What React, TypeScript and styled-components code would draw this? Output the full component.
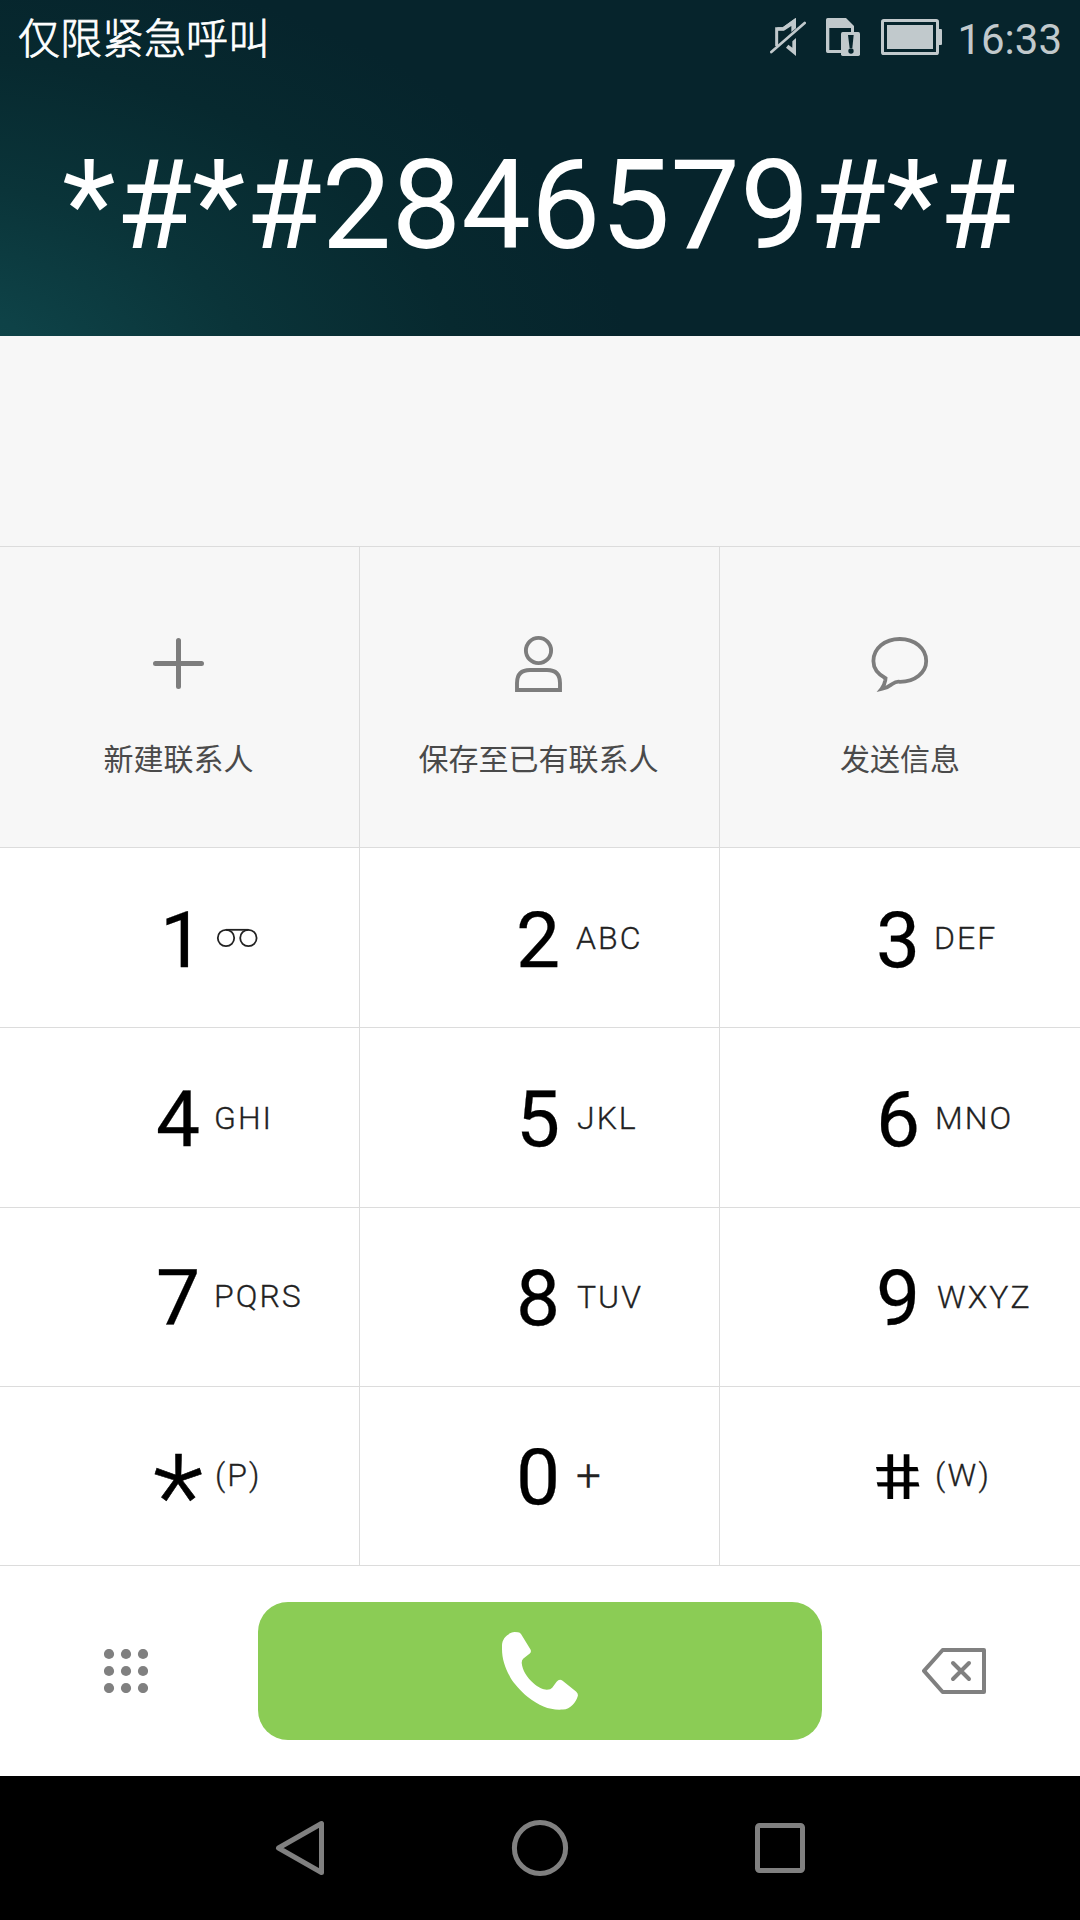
import React from "react";
import styled, { createGlobalStyle } from "styled-components";

const LINE = "#dcdcdc";
const GREY = "#7d7d7d";
const STATUS = "#c1c9cc";

const GlobalStyle = createGlobalStyle`
  body {
    margin: 0;
    background: #fff;
    font-family: Roboto, "Noto Sans CJK SC", sans-serif;
  }
  button {
    font: inherit;
    border: 0;
    padding: 0;
    background: none;
    color: inherit;
  }
  svg { display: block; flex: none; }
`;

const Screen = styled.main`
  width: 1080px;
  height: 1920px;
  display: flex;
  flex-direction: column;
  overflow: hidden;
`;

const Header = styled.header`
  height: 336px;
  display: flex;
  flex-direction: column;
  background: radial-gradient(
    ellipse 720px 440px at -8% 116%,
    #10474b 0%,
    #0e4247 20%,
    #0a3439 47%,
    #07292f 76%,
    #06242c 100%
  );
`;

const StatusBar = styled.div`
  height: 76px;
  display: flex;
  align-items: flex-start;
  padding: 0 18px;
  box-sizing: border-box;
`;

const Carrier = styled.span`
  flex: 1;
  margin-top: 6px;
  font: 300 42px/60px "Noto Sans CJK SC", sans-serif;
  color: #fff;
  -webkit-text-stroke: 0.8px #fff;
`;

const StatusIcon = styled.span<{ $top: number; $gap: number }>`
  margin-top: ${(p) => p.$top}px;
  margin-right: ${(p) => p.$gap}px;
`;

const Clock = styled.time`
  margin-top: 10px;
  font-size: 42px;
  line-height: 60px;
  color: ${STATUS};
`;

const DialedNumber = styled.div`
  height: 180px;
  line-height: 180px;
  margin-top: 40px;
  padding-right: 2px;
  text-align: center;
  white-space: nowrap;
  font-size: 124px;
  font-kerning: none;
  color: #fff;
`;

const Suggestions = styled.section`
  height: 210px;
  background: #f7f7f7;
`;

const Actions = styled.section`
  height: 301px;
  display: grid;
  grid-template-columns: repeat(3, 1fr);
  background: #f7f7f7;
`;

const Action = styled.button`
  display: flex;
  flex-direction: column;
  align-items: center;
  border-top: 1px solid ${LINE};
  border-right: 1px solid ${LINE};
  padding: 86px 2px 0 0;
  &:last-child {
    border-right: 0;
    padding-right: 0;
  }
`;

const ActionLabel = styled.span`
  margin-top: 42px;
  font: 400 30px/44px "Noto Sans CJK SC", sans-serif;
  color: #4a4a4a;
`;

const Keypad = styled.section`
  display: grid;
  grid-template-columns: repeat(3, 360px);
  grid-template-rows: 180px 180px 179px 179px;
`;

const Key = styled.button<{ $lift: number }>`
  display: flex;
  align-items: flex-start;
  box-sizing: border-box;
  border-top: 1px solid ${LINE};
  border-right: 1px solid ${LINE};
  padding: ${(p) => 52 - p.$lift}px 0 0 138px;
  color: #000;
  &:nth-child(3n) {
    border-right: 0;
  }
`;

const Digit = styled.span`
  width: 80px;
  text-align: center;
  font-size: 78.5px;
  line-height: 80px;
  -webkit-text-stroke: 0.25px #000;
`;

const One = styled(Digit)`
  box-sizing: border-box;
  padding-left: 8px;
`;

const Star = styled(Digit)`
  font-size: 117px;
  font-weight: 300;
  line-height: 80px;
  padding-top: 20px;
  -webkit-text-stroke: 0.6px #000;
`;

const Hash = styled(Digit)`
  font-size: 63px;
  padding-top: 1px;
  margin: 0 2px 0 -2px;
  transform: scaleX(1.3) skewX(11deg);
  -webkit-text-stroke: 0;
`;

const Letters = styled.span<{ $shift: number; $rise: number; $large?: boolean }>`
  margin: ${(p) => 19 - p.$rise}px 0 0 ${(p) => -p.$shift}px;
  font-size: ${(p) => (p.$large ? 44 : 32)}px;
  font-weight: 300;
  line-height: 40px;
  letter-spacing: 2px;
  color: #222;
  -webkit-text-stroke: 0.3px #222;
`;

const Reels = styled.span`
  margin: 28px 0 0 -2px;
`;

const CallBar = styled.section`
  height: 211px;
  box-sizing: border-box;
  border-top: 1px solid ${LINE};
  display: grid;
  grid-template-columns: 258px 564px 258px;
  background: #fff;
`;

const SideButton = styled.button<{ $left: number; $top: number }>`
  display: flex;
  align-items: flex-start;
  padding: ${(p) => p.$top}px 0 0 ${(p) => p.$left}px;
`;

const CallButton = styled.button`
  height: 138px;
  margin-top: 36px;
  border-radius: 30px;
  background: #8bcc55;
  display: flex;
  align-items: center;
  justify-content: center;
`;

const NavBar = styled.nav`
  height: 144px;
  background: #000;
  display: flex;
  justify-content: center;
  align-items: center;
  gap: 180px;
`;

const NavButton = styled.button`
  width: 60px;
  height: 60px;
`;

const MutedIcon = () => (
  <svg width="36" height="38" viewBox="0 0 108 114" fill="none" stroke={STATUS}>
    <path d="M20 84V32H40L73 8V26" strokeWidth="9" />
    <path d="M78 0V31L64 42V24L42 38H22V28H38Z" fill={STATUS} stroke="none" />
    <path d="M78 60V114L48 89L55 80L67 89V70Z" fill={STATUS} stroke="none" />
    <path d="M4 102L104 15" strokeWidth="8" strokeLinecap="round" />
  </svg>
);

const SimAlertIcon = () => (
  <svg width="34" height="38" viewBox="0 0 102 114">
    <path
      d="M5 0H60L84 24V44H75V30H10V96H46V105H5Q0 105 0 100V5Q0 0 5 0Z"
      fill={STATUS}
    />
    <rect x="45" y="42" width="57" height="72" rx="5" fill={STATUS} />
    <path d="M66 51H83L79 90H71Z" fill="#06242c" />
    <circle cx="75" cy="99" r="8" fill="#06242c" />
  </svg>
);

const BatteryIcon = () => (
  <svg width="61" height="36" viewBox="0 0 183 108" fill={STATUS}>
    <rect x="4.5" y="4.5" width="165" height="99" rx="4" fill="none" stroke={STATUS} strokeWidth="9" />
    <rect x="18" y="18" width="138" height="72" />
    <path d="M174 30H180Q183 30 183 34V74Q183 78 180 78H174Z" />
  </svg>
);

const AddIcon = () => (
  <svg width="58" height="60" viewBox="0 0 58 60" stroke={GREY} strokeWidth="5" strokeLinecap="round">
    <path d="M28.5 7.5V53.5M5.5 30.5H51.5" />
  </svg>
);

const PersonIcon = () => (
  <svg width="58" height="60" viewBox="0 0 58 60" fill="none" stroke={GREY} strokeWidth="3.9">
    <circle cx="28.5" cy="17.5" r="12.6" />
    <path d="M7 57V50Q7 37 20 37H37Q50 37 50 50V57Z" />
  </svg>
);

const BubbleIcon = () => (
  <svg width="58" height="60" viewBox="0 0 58 60" fill="none" stroke={GREY} strokeWidth="3.8">
    <path d="M14.5 45.2C6.6 41 2.4 35 2.4 28C2.4 15.5 13.8 6 28.8 6C43.8 6 55.2 15.5 55.2 28C55.2 39.5 44 48.8 29 48.8C25 48 23.5 49.4 20.5 51.5C17.5 54 14.5 55.2 10.5 56C13 53 13.8 49.8 14.2 47.6Z" />
  </svg>
);

const VoicemailIcon = () => (
  <svg width="42" height="20" viewBox="0 0 42 20" fill="none" stroke="#222" strokeWidth="1.8">
    <circle cx="10" cy="10" r="8.2" />
    <circle cx="32.4" cy="10" r="8.2" />
    <path d="M10 1.8H32.4" />
  </svg>
);

const GridDotsIcon = () => (
  <svg width="44" height="44" viewBox="0 0 44 44" fill="#808080">
    {[5, 22, 39].map((y) =>
      [5, 22, 39].map((x) => <circle key={`${x}-${y}`} cx={x} cy={y} r="5.1" />)
    )}
  </svg>
);

const PhoneIcon = () => (
  <svg width="76" height="78" viewBox="0 0 76 78" fill="#fff">
    <path d="M12.7 .1L16 .2Q18 .4 19 2L28.2 17Q29.8 19.6 27.8 21.4L21.4 26.6Q19.6 28 19.7 31C20.4 38.5 25 45.5 31.5 51.3C36 55.3 41 57.7 44.8 57.7Q48.8 57.6 50.2 55.8L54.6 49.8Q57.4 46.4 60.6 48.8L74 59.5Q76.4 61.4 75.8 64C74 70.5 68.5 77.3 61 77.5C48 78.4 38 74.5 25.8 65C18.5 59 12 51.5 8.6 46C3 35.5 0 27 0 17V13C.4 6 6 .8 12.7 .1Z" />
  </svg>
);

const DeleteIcon = () => (
  <svg
    width="64"
    height="46"
    viewBox="0 0 192 138"
    fill="none"
    stroke="#808080"
    strokeWidth="12"
    strokeLinecap="round"
    strokeLinejoin="round"
  >
    <path d="M6 68.5L62 6H186V132H62Z" />
    <path d="M93 45L141 93M141 45L93 93" />
  </svg>
);

const BackIcon = () => (
  <svg width="60" height="60" viewBox="0 0 60 60" fill="none" stroke="#808080" strokeWidth="5" strokeLinejoin="round">
    <path d="M8.5 30L51.5 5.5V54.5Z" />
  </svg>
);

const HomeIcon = () => (
  <svg width="60" height="60" viewBox="0 0 60 60" fill="none" stroke="#808080" strokeWidth="5">
    <circle cx="30" cy="30" r="25.6" />
  </svg>
);

const RecentIcon = () => (
  <svg width="60" height="60" viewBox="0 0 60 60" fill="none" stroke="#808080" strokeWidth="5">
    <rect x="7.5" y="7.5" width="45" height="45" rx="2" />
  </svg>
);

const actions = [
  { label: "新建联系人", icon: <AddIcon /> },
  { label: "保存至已有联系人", icon: <PersonIcon /> },
  { label: "发送信息", icon: <BubbleIcon /> },
];

type KeyData = { symbol: string; letters: string; shift: number; rise: number };

const keys: KeyData[] = [
  { symbol: "1", letters: "", shift: 0, rise: 0 },
  { symbol: "2", letters: "ABC", shift: 2, rise: 1 },
  { symbol: "3", letters: "DEF", shift: 4, rise: 1 },
  { symbol: "4", letters: "GHI", shift: 4, rise: 0 },
  { symbol: "5", letters: "JKL", shift: 1, rise: 0 },
  { symbol: "6", letters: "MNO", shift: 3, rise: 0 },
  { symbol: "7", letters: "PQRS", shift: 4, rise: 1 },
  { symbol: "8", letters: "TUV", shift: 1, rise: 0 },
  { symbol: "9", letters: "WXYZ", shift: 1, rise: 0 },
  { symbol: "*", letters: "(P)", shift: 3, rise: 1 },
  { symbol: "0", letters: "+", shift: 2, rise: 0 },
  { symbol: "#", letters: "(W)", shift: 3, rise: 1 },
];

const rowLift = [0, 1, 2, 2];

const symbolFor = (symbol: string) => {
  if (symbol === "1") return <One>1</One>;
  if (symbol === "*") return <Star>*</Star>;
  if (symbol === "#") return <Hash>#</Hash>;
  return <Digit>{symbol}</Digit>;
};

export default function App() {
  return (
    <Screen>
      <GlobalStyle />
      <Header>
        <StatusBar>
          <Carrier>仅限紧急呼叫</Carrier>
          <StatusIcon $top={18} $gap={20}><MutedIcon /></StatusIcon>
          <StatusIcon $top={18} $gap={21}><SimAlertIcon /></StatusIcon>
          <StatusIcon $top={19} $gap={15}><BatteryIcon /></StatusIcon>
          <Clock>16:33</Clock>
        </StatusBar>
        <DialedNumber>*#*#2846579#*#</DialedNumber>
      </Header>
      <Suggestions />
      <Actions>
        {actions.map((a) => (
          <Action key={a.label}>
            {a.icon}
            <ActionLabel>{a.label}</ActionLabel>
          </Action>
        ))}
      </Actions>
      <Keypad>
        {keys.map((k, i) => (
          <Key key={k.symbol} $lift={rowLift[Math.floor(i / 3)]}>
            {symbolFor(k.symbol)}
            {k.letters ? (
              <Letters $shift={k.shift} $rise={k.rise} $large={k.letters === "+"}>
                {k.letters}
              </Letters>
            ) : (
              <Reels><VoicemailIcon /></Reels>
            )}
          </Key>
        ))}
      </Keypad>
      <CallBar>
        <SideButton $left={104} $top={83}><GridDotsIcon /></SideButton>
        <CallButton><PhoneIcon /></CallButton>
        <SideButton $left={100} $top={82}><DeleteIcon /></SideButton>
      </CallBar>
      <NavBar>
        <NavButton><BackIcon /></NavButton>
        <NavButton><HomeIcon /></NavButton>
        <NavButton><RecentIcon /></NavButton>
      </NavBar>
    </Screen>
  );
}
